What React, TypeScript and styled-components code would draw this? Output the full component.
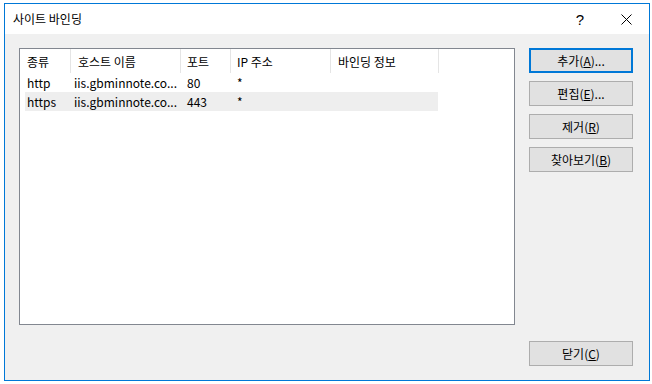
import React from "react";
import styled, { createGlobalStyle } from "styled-components";

const GlobalStyle = createGlobalStyle`
  html, body {
    margin: 0;
    padding: 0;
    background: #ffffff;
  }
  * {
    box-sizing: border-box;
  }
`;

const font = `"Noto Sans CJK KR", "Noto Sans", sans-serif`;
const accent = "#0078d7";

const Window = styled.div`
  margin: 3px 0 0 4px;
  width: 646px;
  height: 378px;
  border: 1px solid ${accent};
  background: #f0f0f0;
  display: flex;
  flex-direction: column;
  font-family: ${font};
  font-size: 12px;
  color: #000;
`;

const TitleBar = styled.div`
  height: 30px;
  background: #ffffff;
  display: flex;
  align-items: center;
`;

const Title = styled.div`
  flex: 1;
  padding-left: 8px;
  font-size: 12px;
  line-height: 16px;
`;

const TitleButton = styled.div`
  width: 46px;
  height: 30px;
  display: flex;
  align-items: center;
  justify-content: center;
  font-family: "Liberation Sans", sans-serif;
  font-size: 15px;
`;

const Client = styled.div`
  flex: 1;
  display: flex;
  gap: 14px;
  padding: 14px 15px 14px 14px;
`;

const ListBox = styled.div`
  width: 496px;
  height: 277px;
  border: 1px solid #828790;
  background: #ffffff;
`;

const HeaderRow = styled.div`
  display: flex;
  height: 24px;
`;

const HeaderCell = styled.div<{ $w: number; $pad: number }>`
  width: ${(p) => p.$w}px;
  padding-left: ${(p) => p.$pad}px;
  border-right: 1px solid #e5e5e5;
  display: flex;
  align-items: center;
  white-space: nowrap;
`;

const Row = styled.div<{ $selected?: boolean }>`
  display: flex;
  height: 19px;
  margin-left: 5px;
  width: 413px;
  background: ${(p) => (p.$selected ? "#eeeeee" : "transparent")};
`;

const Cell = styled.div<{ $w: number; $pad: number }>`
  width: ${(p) => p.$w}px;
  padding-left: ${(p) => p.$pad}px;
  display: flex;
  align-items: center;
  white-space: nowrap;
  overflow: hidden;
`;

const ButtonColumn = styled.div`
  width: 104px;
  display: flex;
  flex-direction: column;
  gap: 8px;
`;

const Button = styled.div<{ $focused?: boolean }>`
  height: 25px;
  background: #e1e1e1;
  border: ${(p) => (p.$focused ? `2px solid ${accent}` : "1px solid #adadad")};
  display: flex;
  align-items: center;
  justify-content: center;
  white-space: nowrap;

  &:last-child {
    margin-top: auto;
  }
`;

const Key = styled.span`
  text-decoration: underline;
`;

const headers = [
  { label: "종류", w: 51, pad: 7 },
  { label: "호스트 이름", w: 110, pad: 7 },
  { label: "포트", w: 50, pad: 6 },
  { label: "IP 주소", w: 100, pad: 6 },
  { label: "바인딩 정보", w: 108, pad: 7 },
];

const rowCols = [
  { w: 46, pad: 2 },
  { w: 110, pad: 3 },
  { w: 50, pad: 6 },
  { w: 100, pad: 6 },
  { w: 107, pad: 7 },
];

const bindings = [
  ["http", "iis.gbminnote.co...", "80", "*", ""],
  ["https", "iis.gbminnote.co...", "443", "*", ""],
];

const buttons = [
  { text: "추가(", key: "A", rest: ")...", focused: true },
  { text: "편집(", key: "E", rest: ")..." },
  { text: "제거(", key: "R", rest: ")" },
  { text: "찾아보기(", key: "B", rest: ")" },
  { text: "닫기(", key: "C", rest: ")" },
];

const CloseIcon = () => (
  <svg width="11" height="11" viewBox="0 0 11 11">
    <path d="M0.5 0.5 L10.5 10.5 M10.5 0.5 L0.5 10.5" stroke="#000" strokeWidth="1" />
  </svg>
);

export default function App() {
  return (
    <>
      <GlobalStyle />
      <Window>
        <TitleBar>
          <Title>사이트 바인딩</Title>
          <TitleButton>?</TitleButton>
          <TitleButton>
            <CloseIcon />
          </TitleButton>
        </TitleBar>
        <Client>
          <ListBox>
            <HeaderRow>
              {headers.map((h) => (
                <HeaderCell key={h.label} $w={h.w} $pad={h.pad}>
                  {h.label}
                </HeaderCell>
              ))}
            </HeaderRow>
            {bindings.map((b, i) => (
              <Row key={b[0]} $selected={i === 1}>
                {b.map((v, j) => (
                  <Cell key={j} $w={rowCols[j].w} $pad={rowCols[j].pad}>
                    {v}
                  </Cell>
                ))}
              </Row>
            ))}
          </ListBox>
          <ButtonColumn>
            {buttons.map((b) => (
              <Button key={b.key} $focused={b.focused}>
                {b.text}
                <Key>{b.key}</Key>
                {b.rest}
              </Button>
            ))}
          </ButtonColumn>
        </Client>
      </Window>
    </>
  );
}
